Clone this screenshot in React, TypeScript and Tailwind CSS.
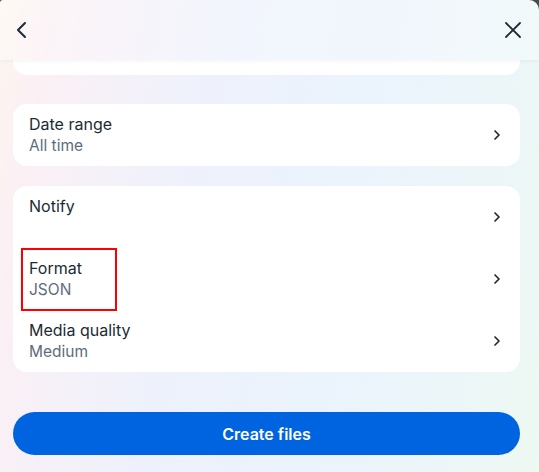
import React from 'react';

const Chevron = () => (
  <svg width="16" height="16" viewBox="0 0 16 16" fill="none" className="shrink-0">
    <path d="M6 4l4 4-4 4" stroke="#1c2b33" strokeWidth="1.7" strokeLinecap="round" strokeLinejoin="round" />
  </svg>
);

type RowProps = { title: string; value?: string };

const Row: React.FC<RowProps> = ({ title, value }) => (
  <div className="flex items-center justify-between pl-4 pr-[15px] py-[10px]">
    <div className="flex flex-col">
      <span className="text-[16px] leading-[21px] text-[#1c2b33]">{title}</span>
      <span className="text-[15.5px] leading-[21px] text-[#5d6c7b] h-[21px]">{value}</span>
    </div>
    <Chevron />
  </div>
);

export default function App() {
  return (
    <div className="w-[539px] h-[472px] bg-[#4a4a4a] overflow-hidden" style={{ fontFamily: 'Inter, "Noto Sans", sans-serif' }}>
      <div className="relative w-full h-full rounded-tr-[10px] rounded-tl-[3px] overflow-hidden bg-[linear-gradient(100deg,#fdf6ef_0%,#fbf0f4_8%,#eef1fc_35%,#ebf3fd_60%,#ecf6f8_85%,#eef9f2_100%)] flex flex-col">
        <div className="relative z-10 h-[60px] shrink-0 flex items-center justify-between px-[14px] bg-white/30 shadow-[0_1px_4px_rgba(0,0,0,0.05)]">
          <svg width="16" height="18" viewBox="0 0 16 18" fill="none">
            <path d="M11 2L4 9l7 7" stroke="#1c2b33" strokeWidth="2" strokeLinecap="round" strokeLinejoin="round" />
          </svg>
          <svg width="18" height="18" viewBox="0 0 18 18" fill="none" className="mr-[3px]">
            <path d="M2 2l14 14M16 2L2 16" stroke="#1c2b33" strokeWidth="1.8" strokeLinecap="round" />
          </svg>
        </div>

        <div className="flex flex-col px-[13px] pr-[19px]">
          <div className="h-[15px] bg-white rounded-b-[14px]" />

          <div className="mt-[29px] bg-white rounded-[14px]">
            <Row title="Date range" value="All time" />
          </div>

          <div className="relative mt-[20px] bg-white rounded-[14px]">
            <Row title="Notify" />
            <Row title="Format" value="JSON" />
            <Row title="Media quality" value="Medium" />
            <div className="absolute left-[8px] top-[62px] w-[96px] h-[63px] border-2 border-[#ff0000]" />
          </div>

          <button className="mt-[40px] h-[43px] rounded-full bg-[#0064e0] text-white text-[16px] font-semibold">
            Create files
          </button>
        </div>
      </div>
    </div>
  );
}
